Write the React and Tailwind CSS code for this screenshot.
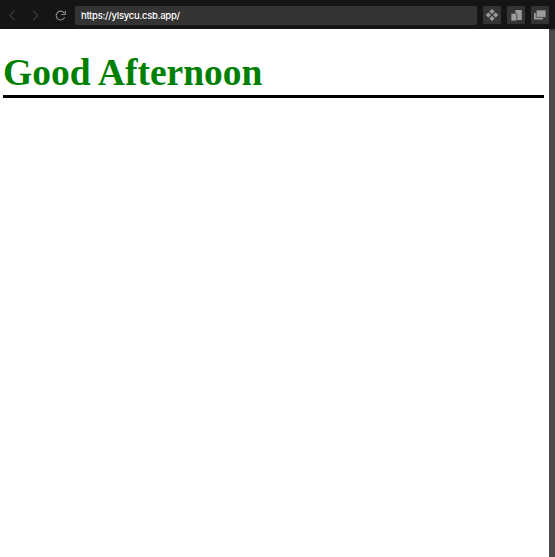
import React from "react";

function ToolButton({ label, children }) {
  return (
    <button aria-label={label} className="size-[18px] shrink-0 rounded-[1px] bg-[#343434] text-[#9c9c9c]">
      <svg viewBox="0 0 18 18" className="block size-[18px]" fill="currentColor">
        {children}
      </svg>
    </button>
  );
}

function BrowserBar() {
  return (
    <header className="flex h-[29px] items-start bg-[#151515] pt-[6px] pr-[6px]">
      <svg viewBox="0 0 75 18" className="block h-[18px] w-[75px] shrink-0" fill="none" strokeWidth="1">
        <path d="M14.5 5 9.5 9.3l5 4.7" stroke="#505050" />
        <path d="m33 5 5 4.3-5 4.7" stroke="#505050" />
        <path d="M64.3 7.2a4.4 4.4 0 1 0 .3 4.1M65.3 4.7v3.8h-4" stroke="#8c8c8c" strokeWidth="1.1" />
      </svg>
      <div className="flex h-[19px] w-[402px] shrink-0 items-center rounded-[1px] bg-[#343434] pt-px pl-[6px] font-['Inter',sans-serif] text-[9.5px] leading-none font-medium tracking-[-0.28px] text-white">
        https://ylsycu.csb.app/
      </div>
      <nav className="ml-[6px] flex gap-[6px]">
        <ToolButton label="Open components">
          <g stroke="currentColor" strokeWidth="0.9" strokeLinejoin="round">
            <path d="m9 3.4 2.2 2.1L9 7.6 6.8 5.5zM5.4 6.9l2.2 2.1-2.2 2.1L3.2 9zM12.6 6.9l2.2 2.1-2.2 2.1L10.4 9zM9 10.4l2.2 2.1L9 14.6l-2.2-2.1z" />
          </g>
        </ToolButton>
        <ToolButton label="Responsive preview">
          <rect x="8.3" y="4" width="6.5" height="10" rx="0.4" />
          <rect x="4" y="7.2" width="5.8" height="7.8" rx="0.6" stroke="#343434" strokeWidth="0.7" />
        </ToolButton>
        <ToolButton label="Open new window">
          <rect x="3" y="7" width="9" height="6.5" rx="0.4" />
          <rect x="5.2" y="4" width="9.8" height="7.4" rx="0.6" stroke="#343434" strokeWidth="0.7" />
        </ToolButton>
      </nav>
    </header>
  );
}

export default function App() {
  return (
    <div className="flex h-screen flex-col overflow-hidden bg-white">
      <BrowserBar />
      <div className="flex min-h-0 flex-1">
        <main className="flex-1 pt-[21px] pr-[5px] pl-[3px]">
          <h1 className="h-[48px] border-b-[3px] border-black font-['Liberation_Serif',serif] text-[37.5px] leading-[45px] font-bold whitespace-nowrap text-[#008000]">
            Good Afternoon
          </h1>
        </main>
        <div className="w-[6px] border-t-2 border-[#3c3c3c] bg-[#4a4a4a]" />
      </div>
    </div>
  );
}
